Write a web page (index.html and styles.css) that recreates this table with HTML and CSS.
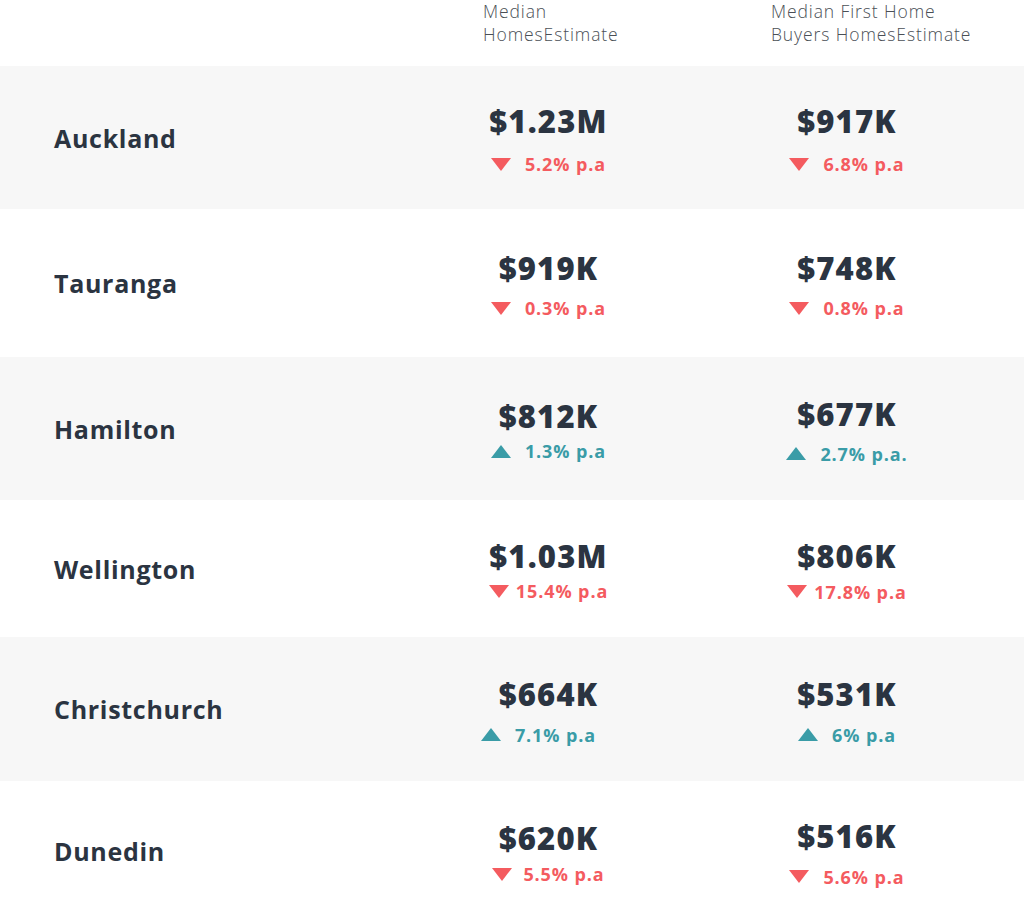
FILE: index.html
```html
<!DOCTYPE html>
<html lang="en">
<head>
<meta charset="utf-8">
<title>Median Home Estimates</title>
<link rel="stylesheet" href="styles.css">
</head>
<body>
<div class="table">
  <div class="row head">
    <div class="name"></div>
    <div class="hcell h1">Median<br>HomesEstimate</div>
    <div class="hcell h2">Median First Home<br>Buyers HomesEstimate</div>
  </div>

  <div class="row grey r143">
    <div class="name">Auckland</div>
    <div class="cell"><div class="val">$1.23M</div><div class="chg down g18"><svg class="tri" viewBox="0 0 20 13"><path d="M0 0H20L10 13Z"/></svg><span>5.2% p.a</span></div></div>
    <div class="cell"><div class="val">$917K</div><div class="chg down g18"><svg class="tri" viewBox="0 0 20 13"><path d="M0 0H20L10 13Z"/></svg><span>6.8% p.a</span></div></div>
  </div>

  <div class="row r148">
    <div class="name">Tauranga</div>
    <div class="cell"><div class="val">$919K</div><div class="chg down g15"><svg class="tri" viewBox="0 0 20 13"><path d="M0 0H20L10 13Z"/></svg><span>0.3% p.a</span></div></div>
    <div class="cell"><div class="val">$748K</div><div class="chg down g15"><svg class="tri" viewBox="0 0 20 13"><path d="M0 0H20L10 13Z"/></svg><span>0.8% p.a</span></div></div>
  </div>

  <div class="row grey r143">
    <div class="name">Hamilton</div>
    <div class="cell"><div class="val">$812K</div><div class="chg up g10"><svg class="tri" viewBox="0 0 20 13"><path d="M0 13H20L10 0Z"/></svg><span>1.3% p.a</span></div></div>
    <div class="cell"><div class="val">$677K</div><div class="chg up g15"><svg class="tri" viewBox="0 0 20 13"><path d="M0 13H20L10 0Z"/></svg><span>2.7% p.a.</span></div></div>
  </div>

  <div class="row r137">
    <div class="name">Wellington</div>
    <div class="cell"><div class="val">$1.03M</div><div class="chg down g10 tight"><svg class="tri" viewBox="0 0 20 13"><path d="M0 0H20L10 13Z"/></svg><span>15.4% p.a</span></div></div>
    <div class="cell"><div class="val">$806K</div><div class="chg down g11 tight"><svg class="tri" viewBox="0 0 20 13"><path d="M0 0H20L10 13Z"/></svg><span>17.8% p.a</span></div></div>
  </div>

  <div class="row grey r144">
    <div class="name">Christchurch</div>
    <div class="cell"><div class="val">$664K</div><div class="chg up g16 shift"><svg class="tri" viewBox="0 0 20 13"><path d="M0 13H20L10 0Z"/></svg><span>7.1% p.a</span></div></div>
    <div class="cell"><div class="val">$531K</div><div class="chg up g16"><svg class="tri" viewBox="0 0 20 13"><path d="M0 13H20L10 0Z"/></svg><span>6% p.a</span></div></div>
  </div>

  <div class="row r140">
    <div class="name">Dunedin</div>
    <div class="cell"><div class="val">$620K</div><div class="chg down g11 mid"><svg class="tri" viewBox="0 0 20 13"><path d="M0 0H20L10 13Z"/></svg><span>5.5% p.a</span></div></div>
    <div class="cell"><div class="val">$516K</div><div class="chg down g16"><svg class="tri" viewBox="0 0 20 13"><path d="M0 0H20L10 13Z"/></svg><span>5.6% p.a</span></div></div>
  </div>
</div>
</body>
</html>
```

FILE: styles.css
```css
html, body {
  margin: 0;
  padding: 0;
  background: #ffffff;
}

body {
  font-family: "Open Sans", "Liberation Sans", sans-serif;
  color: #2b3441;
}

.table {
  width: 1024px;
}

.row {
  display: grid;
  grid-template-columns: 427px 240px 357px;
  align-items: center;
}

.row.grey {
  background: #f7f7f7;
}

.head {
  height: 66px;
  align-items: start;
}

.r137 { height: 137px; }
.r140 { height: 140px; }
.r143 { height: 143px; }
.r144 { height: 144px; }
.r148 { height: 148px; }

.name {
  padding-left: 54px;
  font-size: 25px;
  font-weight: 700;
  letter-spacing: 0.7px;
  color: #2b3441;
}

.hcell {
  font-size: 17.5px;
  font-weight: 300;
  line-height: 23px;
  letter-spacing: 0.9px;
  color: #4a4f56;
}

.h1 { padding-left: 56px; }
.h2 { padding-left: 104px; }

.cell {
  display: flex;
  flex-direction: column;
  align-items: center;
  margin-top: 4px;
  padding-left: 3px;
}

.val {
  font-size: 31px;
  font-weight: 800;
  line-height: 31px;
  letter-spacing: 1.2px;
  color: #2b3441;
}

.chg {
  display: flex;
  align-items: center;
  font-size: 18px;
  font-weight: 700;
  line-height: 18px;
  letter-spacing: 0.9px;
}

.chg .tri {
  width: 20px;
  height: 13px;
  margin-right: 14px;
}

.chg.tight .tri { margin-right: 7px; }
.chg.mid .tri { margin-right: 11px; }
.chg.shift { margin-left: -20px; }

.down { color: #f45b5f; }
.down .tri { fill: #f45b5f; }
.up { color: #3a9ca7; }
.up .tri { fill: #3a9ca7; }

.g10 { margin-top: 10px; }
.g11 { margin-top: 11px; }
.g15 { margin-top: 15px; }
.g16 { margin-top: 16px; }
.g18 { margin-top: 18px; }
```
